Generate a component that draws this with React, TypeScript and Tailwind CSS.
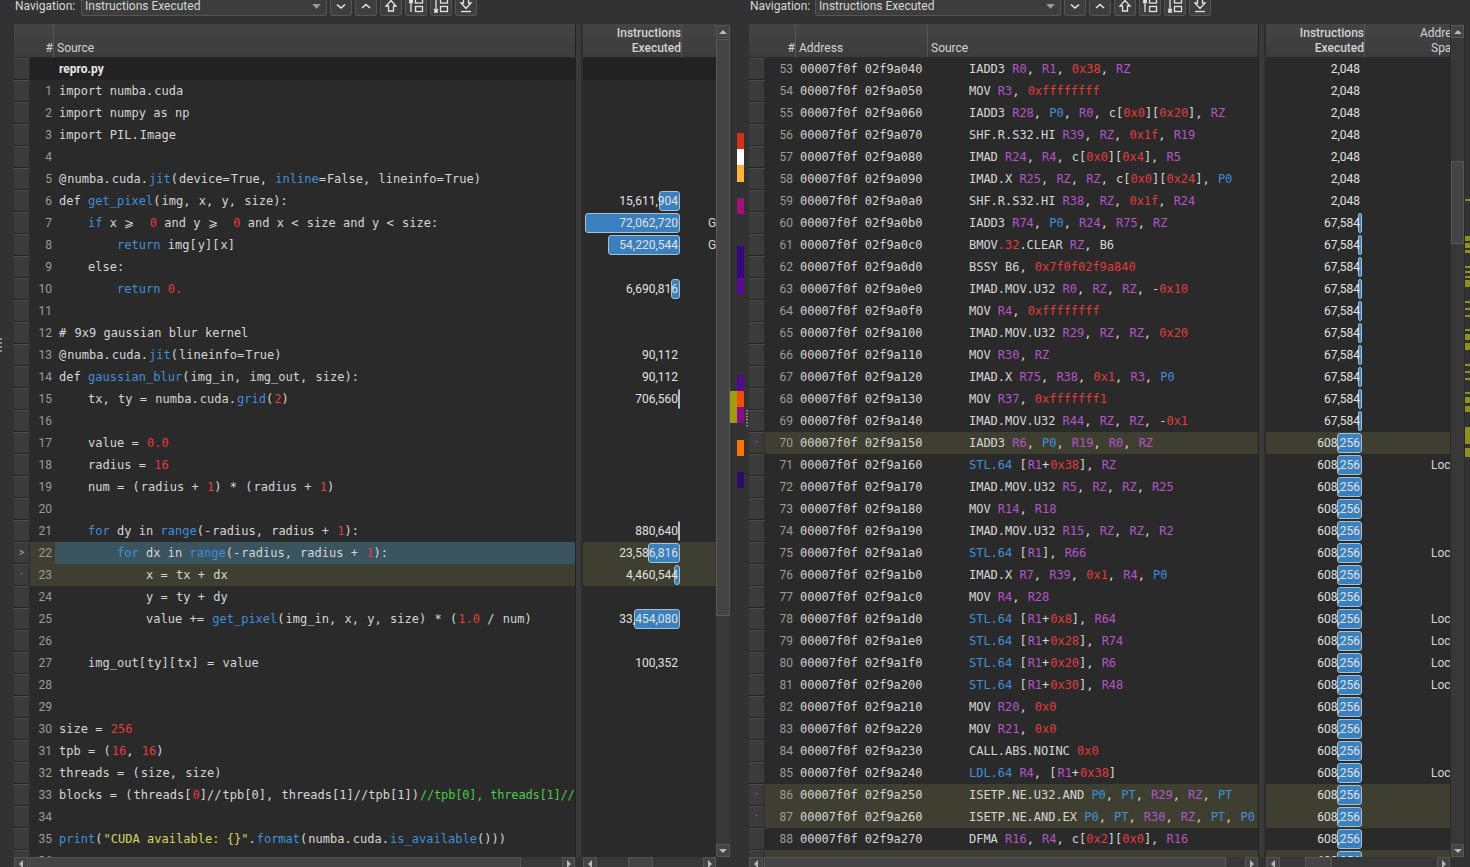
import React from 'react';

const ROW = 'h-[22px] shrink-0';
const MONO = "font-['DejaVu_Sans_Mono'] text-[12px] whitespace-pre";
const OLIVE = 'bg-[#3e3f30]';

const TOKEN_COLORS: Record<string, string> = {
  b: 'text-[#3f8fd8]',
  r: 'text-[#e23c3c]',
  g: 'text-[#4cc94c] tracking-[-0.2px]',
  y: 'text-[#d6d65a]',
  p: 'text-[#b455c8]',
  d: '',
};

// ~b:text~ marks a coloured run
const sourceLines: string[] = [
  'import numba.cuda',
  'import numpy as np',
  'import PIL.Image',
  '',
  '@numba.cuda.~b:jit~(device=True, ~b:inline~=False, lineinfo=True)',
  'def ~b:get_pixel~(img, x, y, size):',
  '    ~b:if~ x ⩾  ~r:0~ and y ⩾  ~r:0~ and x < size and y < size:',
  '        ~b:return~ img[y][x]',
  '    else:',
  '        ~b:return~ ~r:0.~',
  '',
  '# 9x9 gaussian blur kernel',
  '@numba.cuda.~b:jit~(lineinfo=True)',
  'def ~b:gaussian_blur~(img_in, img_out, size):',
  '    tx, ty = numba.cuda.~b:grid~(~r:2~)',
  '',
  '    value = ~r:0.0~',
  '    radius = ~r:16~',
  '    num = (radius + ~r:1~) * (radius + ~r:1~)',
  '',
  '    ~b:for~ dy in ~b:range~(-radius, radius + ~r:1~):',
  '        ~b:for~ dx in ~b:range~(-radius, radius + ~r:1~):',
  '            x = tx + dx',
  '            y = ty + dy',
  '            value += ~b:get_pixel~(img_in, x, y, size) * (~r:1.0~ / num)',
  '',
  '    img_out[ty][tx] = value',
  '',
  '',
  'size = ~r:256~',
  'tpb = (~r:16~, ~r:16~)',
  'threads = (size, size)',
  'blocks = (threads[~r:0~]//~d:tpb[0]~, ~d:threads[1]//tpb[1]~)~g://tpb[0], threads[1]//~',
  '',
  '~b:print~(~y:"CUDA available: {}"~.~b:format~(numba.cuda.~b:is_available~()))',
  '',
];

const sourceMetrics: Record<number, [string, number?]> = {
  6: ['15,611,904', 21],
  7: ['72,062,720', 95],
  8: ['54,220,544', 72],
  10: ['6,690,816', 9],
  13: ['90,112'],
  14: ['90,112'],
  15: ['706,560', 2],
  21: ['880,640', 2],
  22: ['23,586,816', 32],
  23: ['4,460,544', 6],
  25: ['33,454,080', 46],
  27: ['100,352'],
};

const asm: string[] = [
  'IADD3 R0, R1, 0x38, RZ',
  'MOV R3, 0xffffffff',
  'IADD3 R28, P0, R0, c[0x0][0x20], RZ',
  'SHF.R.S32.HI R39, RZ, 0x1f, R19',
  'IMAD R24, R4, c[0x0][0x4], R5',
  'IMAD.X R25, RZ, RZ, c[0x0][0x24], P0',
  'SHF.R.S32.HI R38, RZ, 0x1f, R24',
  'IADD3 R74, P0, R24, R75, RZ',
  'BMOV.32.CLEAR RZ, B6',
  'BSSY B6, 0x7f0f02f9a840',
  'IMAD.MOV.U32 R0, RZ, RZ, -0x10',
  'MOV R4, 0xffffffff',
  'IMAD.MOV.U32 R29, RZ, RZ, 0x20',
  'MOV R30, RZ',
  'IMAD.X R75, R38, 0x1, R3, P0',
  'MOV R37, 0xfffffff1',
  'IMAD.MOV.U32 R44, RZ, RZ, -0x1',
  'IADD3 R6, P0, R19, R0, RZ',
  'STL.64 [R1+0x38], RZ',
  'IMAD.MOV.U32 R5, RZ, RZ, R25',
  'MOV R14, R18',
  'IMAD.MOV.U32 R15, RZ, RZ, R2',
  'STL.64 [R1], R66',
  'IMAD.X R7, R39, 0x1, R4, P0',
  'MOV R4, R28',
  'STL.64 [R1+0x8], R64',
  'STL.64 [R1+0x28], R74',
  'STL.64 [R1+0x20], R6',
  'STL.64 [R1+0x30], R48',
  'MOV R20, 0x0',
  'MOV R21, 0x0',
  'CALL.ABS.NOINC 0x0',
  'LDL.64 R4, [R1+0x38]',
  'ISETP.NE.U32.AND P0, PT, R29, RZ, PT',
  'ISETP.NE.AND.EX P0, PT, R30, RZ, PT, P0',
  'DFMA R16, R4, c[0x2][0x0], R16',
  '',
];

const localRows = [71, 75, 78, 79, 80, 81, 85];
const hotAsmRows = [70, 86, 87, 89];

const ticks: [number, number][] = [
  [199, 2], [236, 5], [243, 5], [250, 3], [266, 2], [271, 2], [276, 2], [280, 7],
  [301, 2], [308, 2], [315, 2], [329, 2], [334, 6], [343, 7], [364, 2], [371, 2],
  [378, 2], [392, 2], [397, 6], [406, 6], [427, 17], [448, 9],
];

const heat: [number, number, number, string][] = [
  [7, 133, 16, '#d0321c'],
  [7, 149, 16, '#ffffff'],
  [7, 165, 17, '#ffb43c'],
  [7, 198, 16, '#a0127a'],
  [7, 246, 32, '#36067c'],
  [7, 278, 16, '#5a0a96'],
  [7, 375, 16, '#54088e'],
  [0, 391, 32, '#a29c14'],
  [7, 391, 16, '#f04e00'],
  [7, 407, 16, '#8a0c8c'],
  [7, 440, 16, '#ff7208'],
  [7, 472, 16, '#2e0a66'],
];

// the original spaces its syntax tokens about a pixel apart
function spacedPunctuation(text: string) {
  return text.split(/([^\w\s]+)/).map((part, i) =>
    i % 2 === 1 ? <span key={i} className="mr-px">{part}</span> : <span key={i}>{part}</span>
  );
}

function parseMarkup(text: string) {
  const parts = text.split(/~(\w:[^~]*)~/);
  return parts.map((part, i) =>
    i % 2 === 1 ? (
      <span key={i} className={TOKEN_COLORS[part[0]]}>{part.slice(2)}</span>
    ) : (
      <span key={i}>{spacedPunctuation(part)}</span>
    )
  );
}

function parseAsm(text: string) {
  const re = /(\bR\d+\b|\bRZ\b)|(\bP0\b|\bPT\b|^STL\.64|^LDL\.64)|(0x[0-9a-f]+|(?<=BMOV)\.32)|(,|\+|\[(?=R))/g;
  const out: React.ReactNode[] = [];
  let last = 0;
  let m: RegExpExecArray | null;
  while ((m = re.exec(text))) {
    out.push(text.slice(last, m.index));
    const cls = m[1] ? TOKEN_COLORS.p : m[2] ? TOKEN_COLORS.b : m[3] ? TOKEN_COLORS.r : 'mr-px';
    out.push(<span key={m.index} className={cls}>{m[0]}</span>);
    last = m.index + m[0].length;
  }
  out.push(text.slice(last));
  return out;
}

const GutterCell = ({ mark }: { mark?: string }) => (
  <div className={`${ROW} w-[16px] flex items-center justify-center bg-[#3b3b3b] border-t border-t-[#4b4b4b] border-b border-b-[#232323] border-r border-r-[#2c2c2c] text-[10px] text-[#b0b0b0] font-['Roboto'] leading-none`}>
    {mark}
  </div>
);

const Bar = ({ width }: { width: number }) => (
  <div
    className="absolute right-[2px] top-[1px] h-[20px] bg-[#3a80bf] border border-[#a9c0d2] rounded-[3px]"
    style={{ width }}
  />
);

const ValueCell = ({ value, bar }: { value?: string; bar?: number }) => (
  <div className="relative h-full flex items-center justify-end pr-[4px] shrink-0">
    {bar ? <Bar width={bar} /> : null}
    <span className="relative text-[#e2e2e2]">{value}</span>
  </div>
);

const HeaderCell = ({ className, children }: { className?: string; children?: React.ReactNode }) => (
  <div className={`h-full flex flex-col justify-end pb-[1px] border-r border-r-[#555] text-[#d4d4d4] leading-[15px] overflow-hidden ${className ?? ''}`}>
    {children}
  </div>
);

const headerBg = 'h-[34px] shrink-0 flex bg-gradient-to-b from-[#444444] to-[#3c3c3c] border-b border-b-[#2a2a2a]';

const Arrow = ({ dir }: { dir: 'up' | 'down' | 'left' | 'right' }) => {
  const points = { up: '1,6 9,6 5,2', down: '1,2 9,2 5,6', left: '7,1 7,9 3,5', right: '3,1 3,9 7,5' }[dir];
  const size = dir === 'up' || dir === 'down' ? 'w-[10px] h-[8px]' : 'w-[10px] h-[10px]';
  const view = dir === 'up' || dir === 'down' ? '0 0 10 8' : '0 0 10 10';
  return (
    <svg viewBox={view} className={size}>
      <polygon points={points} fill="#b8b8b8" />
    </svg>
  );
};

const ScrollButton = ({ dir, className }: { dir: 'up' | 'down' | 'left' | 'right'; className: string }) => (
  <div className={`shrink-0 flex items-center justify-center bg-[#444] border border-[#565656] ${className}`}>
    <Arrow dir={dir} />
  </div>
);

const VScroll = ({ width, before, thumb }: { width: string; before: string; thumb: string }) => (
  <div className={`${width} shrink-0 flex flex-col bg-[#383838] pt-[1px]`}>
    <ScrollButton dir="up" className="h-[13px]" />
    <div className={`${before} shrink-0`} />
    <div className={`${thumb} shrink-0 bg-[#444] border border-[#585858]`} />
    <div className="flex-1" />
    <ScrollButton dir="down" className="h-[13px]" />
  </div>
);

const HScroll = ({ width, before, thumb }: { width: string; before: string; thumb: string }) => (
  <div className={`${width} h-full shrink-0 flex bg-[#383838]`}>
    <ScrollButton dir="left" className="w-[14px] h-[13px]" />
    <div className={`${before} shrink-0`} />
    <div className={`${thumb} h-[13px] shrink-0 bg-[#444] border border-[#565656]`} />
    <div className="flex-1" />
    <ScrollButton dir="right" className="w-[13px] h-[13px]" />
  </div>
);

const Splitter = () => (
  <div className="w-[8px] shrink-0 flex">
    <div className="w-[1px] bg-[#222]" />
    <div className="w-[5px] bg-[#3a3a3a]" />
    <div className="w-[2px] bg-[#2e2e2e]" />
  </div>
);

const iconStroke = { fill: 'none', stroke: '#e4e4e4', strokeWidth: 1.3 };

const NavIcons: React.ReactNode[] = [
  <path key="a" d="M6 4.5 L10 8 L14 4.5" {...iconStroke} strokeWidth={1.6} />,
  <path key="b" d="M6 8 L10 4.5 L14 8" {...iconStroke} strokeWidth={1.6} />,
  <path key="c" d="M10 0.5 L15 6 L12.5 6 L12.5 11 L7.5 11 L7.5 6 L5 6 Z" {...iconStroke} />,
  <g key="d" {...iconStroke}>
    <path d="M3 0.5 H7 M5 1 V12 M3 3 L5 1 L7 3" />
    <rect x="9.5" y="-2" width="7" height="5" />
    <rect x="9.5" y="6.5" width="7" height="5" />
  </g>,
  <g key="e" {...iconStroke}>
    <path d="M5 0 V11 M3 9 L5 11.5 L7 9 M3 12 H7" />
    <rect x="9.5" y="-2" width="7" height="5" />
    <rect x="9.5" y="6.5" width="7" height="5" />
  </g>,
  <g key="f" {...iconStroke}>
    <path d="M7.5 -2 H12.5 V3 L15 3 L10 8.5 L5 3 L7.5 3 Z" />
    <path d="M5 11.5 H15" />
  </g>,
];

const Toolbar = ({ labelWidth }: { labelWidth: string }) => (
  <div className="h-[24px] shrink-0 flex items-start leading-[12px]">
    <span className={`${labelWidth} shrink-0 text-[#d8d8d8]`}>Navigation:</span>
    <div className="w-[246px] h-[16px] shrink-0 flex items-start justify-between pl-[3px] pr-[5px] bg-[#3d3d3d] border border-t-0 border-[#555] rounded-b-[3px] text-[#d8d8d8]">
      <span>Instructions Executed</span>
      <svg viewBox="0 0 10 6" className="w-[9px] h-[5px] mt-[4px]">
        <polygon points="0,0 10,0 5,6" fill="#9a9a9a" />
      </svg>
    </div>
    <div className="flex gap-[3px] ml-[3px]">
      {NavIcons.map((icon, i) => (
        <div key={i} className="w-[22px] h-[16px] flex items-start justify-center bg-[#3e3e3e] border border-t-0 border-[#555] rounded-b-[3px]">
          <svg viewBox="0 0 20 13" className="w-[20px] h-[13px] overflow-visible">{icon}</svg>
        </div>
      ))}
    </div>
  </div>
);

const SourcePanel = () => (
  <div className="flex-1 min-h-0 flex flex-col">
    <div className="flex-1 min-h-0 flex">
      <div className="w-[561px] shrink-0 flex flex-col overflow-hidden bg-[#2a2a2a]">
        <div className={headerBg}>
          <HeaderCell className="w-[40px] shrink-0 items-end">#</HeaderCell>
          <HeaderCell className="flex-1 pl-[3px] border-r-0">Source</HeaderCell>
        </div>
        <div className={`${ROW} flex`}>
          <GutterCell />
          <div className="flex-1 bg-[#222] pl-[29px] flex items-center font-bold text-[#e6e6e6]">repro.py</div>
        </div>
        {sourceLines.map((line, i) => {
          const n = i + 1;
          const selected = n === 22;
          const hot = n === 22 || n === 23;
          return (
            <div key={n} className={`${ROW} flex`}>
              <GutterCell mark={selected ? '>' : hot ? '·' : undefined} />
              <div className={`w-[25px] shrink-0 flex items-center justify-end pr-[3px] text-[#9c9c9c] ${hot ? OLIVE : ''}`}>{n}</div>
              <div className={`flex-1 min-w-0 flex items-center pl-[4px] overflow-hidden tracking-[0.02px] text-[#d6d6d6] ${selected ? 'bg-[#3a555f]' : hot ? OLIVE : ''} ${MONO}`}>
                <span>{parseMarkup(line)}</span>
              </div>
            </div>
          );
        })}
      </div>
      <Splitter />
      <div className="w-[133px] shrink-0 flex flex-col overflow-hidden bg-[#2a2a2a]">
        <div className={headerBg}>
          <HeaderCell className="w-[99px] shrink-0 items-end font-medium">
            <span>Instructions</span>
            <span>Executed</span>
          </HeaderCell>
          <HeaderCell className="flex-1 border-r-0" />
        </div>
        <div className={`${ROW} bg-[#222]`} />
        {sourceLines.map((_, i) => {
          const n = i + 1;
          const metric = sourceMetrics[n];
          return (
            <div key={n} className={`${ROW} flex ${n === 22 || n === 23 ? OLIVE : ''}`}>
              <div className="w-[99px] shrink-0">
                {metric ? <ValueCell value={metric[0]} bar={metric[1]} /> : null}
              </div>
              <div className="flex-1 flex items-center pl-[26px] overflow-hidden text-[#d6d6d6]">
                {n === 7 || n === 8 ? 'Global' : ''}
              </div>
            </div>
          );
        })}
      </div>
      <VScroll width="w-[14px]" before="h-[1px]" thumb="h-[577px]" />
      <div className="w-[19px] shrink-0">
        <svg viewBox="0 0 19 833" className="w-[19px] h-[833px]">
          {heat.map(([x, y, h, fill], i) => (
            <rect key={i} x={x} y={y - 24} width={7} height={h} fill={fill} />
          ))}
          <line x1="17" y1="386" x2="17" y2="404" stroke="#8a8a8a" strokeWidth="2" strokeDasharray="1.5 1.5" />
        </svg>
      </div>
    </div>
    <div className="h-[10px] shrink-0 flex">
      <HScroll width="w-[561px]" before="w-[1px]" thumb="w-[492px]" />
      <div className="w-[8px]" />
      <HScroll width="w-[133px]" before="w-[31px]" thumb="w-[25px]" />
    </div>
  </div>
);

const AsmPanel = () => (
  <div className="flex-1 min-h-0 flex flex-col">
    <div className="flex-1 min-h-0 flex">
      <div className="w-[509px] shrink-0 flex flex-col overflow-hidden bg-[#2a2a2a]">
        <div className={headerBg}>
          <HeaderCell className="w-[47px] shrink-0 items-end">#</HeaderCell>
          <HeaderCell className="w-[132px] shrink-0 pl-[3px]">Address</HeaderCell>
          <HeaderCell className="flex-1 pl-[3px] border-r-0">Source</HeaderCell>
        </div>
        {asm.map((line, i) => {
          const n = i + 53;
          const hot = hotAsmRows.includes(n);
          return (
            <div key={n} className={`${ROW} flex`}>
              <GutterCell mark={hot ? '·' : undefined} />
              <div className={`flex-1 min-w-0 flex ${hot ? OLIVE : ''}`}>
                <div className="w-[28px] shrink-0 flex items-center justify-end text-[#9c9c9c]">{line ? n : ''}</div>
                <div className={`w-[176px] shrink-0 pl-[7px] flex items-center tracking-[-0.024px] text-[#d6d6d6] ${MONO}`}>
                  {line ? `00007f0f 02f9a${(0x040 + i * 16).toString(16).padStart(3, '0')}` : ''}
                </div>
                <div className={`flex-1 flex items-center overflow-hidden tracking-[-0.024px] text-[#d6d6d6] ${MONO}`}>
                  <span>{parseAsm(line)}</span>
                </div>
              </div>
            </div>
          );
        })}
      </div>
      <Splitter />
      <div className="w-[184px] shrink-0 flex flex-col overflow-hidden bg-[#2a2a2a]">
        <div className={headerBg}>
          <HeaderCell className="w-[99px] shrink-0 items-end font-medium">
            <span>Instructions</span>
            <span>Executed</span>
          </HeaderCell>
          <HeaderCell className="flex-1 border-r-0 pl-[55px] whitespace-nowrap">
            <span>Address</span>
            <span className="pl-[11px]">Space</span>
          </HeaderCell>
        </div>
        {asm.map((_, i) => {
          const n = i + 53;
          const value = n < 60 ? '2,048' : n < 70 ? '67,584' : '608,256';
          const bar = n < 60 ? undefined : n < 70 ? 4 : 25;
          return (
            <div key={n} className={`${ROW} flex ${hotAsmRows.includes(n) ? OLIVE : ''}`}>
              <div className="w-[98px] shrink-0">
                <ValueCell value={value} bar={bar} />
              </div>
              <div className="flex-1 flex items-center pl-[67px] overflow-hidden whitespace-nowrap text-[#d6d6d6]">
                {localRows.includes(n) ? 'Local' : ''}
              </div>
            </div>
          );
        })}
      </div>
      <div className="w-[1px] shrink-0 bg-[#2a2a2a]" />
      <VScroll width="w-[13px]" before="h-[123px]" thumb="h-[83px]" />
      <div className="w-[6px] shrink-0 border-l border-l-[#2a2a2a]">
        <svg viewBox="0 0 5 833" className="w-[5px] h-[833px]">
          {ticks.map(([y, h]) => (
            <rect key={y} x={0} y={y - 24} width={5} height={h} fill="#8f8f1e" />
          ))}
        </svg>
      </div>
    </div>
    <div className="h-[10px] shrink-0 flex">
      <HScroll width="w-[509px]" before="w-[1px]" thumb="w-[462px]" />
      <div className="w-[8px]" />
      <HScroll width="w-[184px]" before="w-[25px]" thumb="w-[27px]" />
    </div>
  </div>
);

export default function App() {
  return (
    <div className="relative h-[867px] w-[1470px] overflow-hidden flex bg-[#323232] font-['Roboto'] text-[12px]">
      <div className="absolute left-0 top-[338px] h-[14px] w-[2px] border-l-2 border-dotted border-l-[#8a8a8a]" />
      <div className="w-[749px] shrink-0 flex flex-col pl-[14px]">
        <div className="-ml-[14px] pl-[15px]">
          <Toolbar labelWidth="w-[66px]" />
        </div>
        <SourcePanel />
      </div>
      <div className="flex-1 min-w-0 flex flex-col">
        <div className="pl-[1px]">
          <Toolbar labelWidth="w-[65px]" />
        </div>
        <AsmPanel />
      </div>
    </div>
  );
}
